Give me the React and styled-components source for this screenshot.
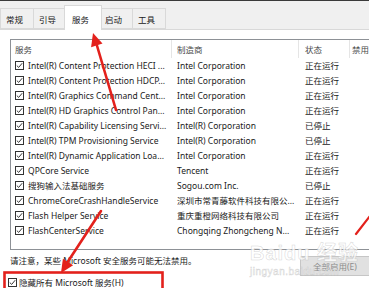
import React from "react";
import styled, { createGlobalStyle } from "styled-components";

const GlobalStyle = createGlobalStyle`
  html, body { margin: 0; padding: 0; background: #fff; }
  * { box-sizing: border-box; }
`;

const FONT = `"Noto Sans", "Noto Sans CJK SC", sans-serif`;

const Root = styled.div({
  position: "relative",
  width: "369px",
  height: "288px",
  overflow: "hidden",
  background: "#fff",
  display: "flex",
  flexDirection: "column",
  fontFamily: FONT,
  fontSize: "8.5px",
  color: "#1a1a1a",
});

const TopEdge = styled.div({
  height: "1px",
  background: "#3a3a3a",
});

const TabStrip = styled.div({
  height: "30px",
  background: "#f0f0f0",
  borderBottom: "1px solid #d9d9d9",
  display: "flex",
  alignItems: "flex-end",
  paddingLeft: "1px",
});

const Tab = styled.div(({ $active }) => ({
  position: "relative",
  zIndex: $active ? 1 : 0,
  width: $active ? "38px" : "34px",
  height: $active ? "25px" : "21px",
  margin: $active ? "0 -2px -1px -3px" : "0 0 0 -1px",
  paddingLeft: $active ? "7px" : "5px",
  paddingTop: $active ? "8px" : "5px",
  background: $active ? "#fff" : "#f0f0f0",
  border: "1px solid #d9d9d9",
  borderBottom: $active ? "none" : "1px solid #d9d9d9",
  lineHeight: "12px",
  color: "#1a1a1a",
}));

const Page = styled.div({
  flex: 1,
  background: "#fff",
  padding: "9px 0 0 10px",
  display: "flex",
  flexDirection: "column",
});

const ListBox = styled.div({
  width: "380px",
  height: "211px",
  border: "1px solid #8d9196",
  background: "#fff",
  overflow: "hidden",
});

const COLS = "161px 127px 51px 1fr";

const HeaderRow = styled.div({
  display: "grid",
  gridTemplateColumns: COLS,
  height: "18px",
});

const HeaderCell = styled.div(({ $pad }) => ({
  display: "flex",
  alignItems: "center",
  paddingLeft: `${$pad}px`,
  borderRight: "1px solid #e5e5e5",
  color: "#4a4a4a",
  whiteSpace: "nowrap",
}));

const Row = styled.div({
  display: "grid",
  gridTemplateColumns: COLS,
  height: "15px",
  alignItems: "center",
});

const Cell = styled.div(({ $pad }) => ({
  display: "flex",
  alignItems: "center",
  gap: "4px",
  paddingLeft: `${$pad}px`,
  whiteSpace: "nowrap",
  overflow: "hidden",
  lineHeight: "15px",
}));

const Box = styled.span({
  flex: "none",
  width: "9px",
  height: "9px",
  border: "1px solid #333",
  background: "#fff",
  display: "inline-flex",
  alignItems: "center",
  justifyContent: "center",
});

const Check = () => (
  <Box>
    <svg width="7" height="7" viewBox="0 0 7 7">
      <path d="M0.8 3.6 L2.7 5.4 L6.2 1.2" fill="none" stroke="#222" strokeWidth="0.9" />
    </svg>
  </Box>
);

const NoteRow = styled.div({
  display: "flex",
  justifyContent: "space-between",
  alignItems: "flex-start",
  marginTop: "5px",
});

const Note = styled.div({
  lineHeight: "12px",
  whiteSpace: "nowrap",
});

const Button = styled.div({
  marginTop: "1px",
  marginRight: "-4px",
  width: "73px",
  height: "20px",
  background: "#e1e1e1",
  border: "1px solid #c6c6c6",
  color: "#8c8c8c",
  display: "flex",
  alignItems: "center",
  paddingLeft: "12px",
  whiteSpace: "nowrap",
});

const HideRow = styled.div({
  display: "flex",
  alignItems: "center",
  gap: "2px",
  marginLeft: "-2px",
  marginTop: "1px",
  lineHeight: "11px",
  whiteSpace: "nowrap",
});

const Watermark = styled.div({
  position: "absolute",
  left: "250px",
  top: "242px",
  color: "rgba(255,255,255,0.8)",
  WebkitTextStroke: "0.5px rgba(170,170,170,0.5)",
  fontFamily: `"Liberation Sans", "Noto Sans CJK SC", sans-serif`,
  pointerEvents: "none",
});

const MarkBig = styled.div({
  fontSize: "20px",
  fontWeight: "bold",
  lineHeight: "22px",
  letterSpacing: "1px",
});

const MarkSmall = styled.div({
  fontSize: "10px",
  lineHeight: "12px",
  marginTop: "2px",
  letterSpacing: "0.5px",
});

const Overlay = styled.svg({
  position: "absolute",
  left: 0,
  top: 0,
  pointerEvents: "none",
});

const RED = "#e3211c";

const services = [
  ["Intel(R) Content Protection HECI ...", "Intel Corporation", "正在运行"],
  ["Intel(R) Content Protection HDCP...", "Intel Corporation", "正在运行"],
  ["Intel(R) Graphics Command Cent...", "Intel Corporation", "正在运行"],
  ["Intel(R) HD Graphics Control Pan...", "Intel Corporation", "正在运行"],
  ["Intel(R) Capability Licensing Servi...", "Intel(R) Corporation", "已停止"],
  ["Intel(R) TPM Provisioning Service", "Intel(R) Corporation", "已停止"],
  ["Intel(R) Dynamic Application Loa...", "Intel Corporation", "正在运行"],
  ["QPCore Service", "Tencent", "正在运行"],
  ["搜狗输入法基础服务", "Sogou.com Inc.", "已停止"],
  ["ChromeCoreCrashHandleService", "深圳市常青藤软件科技有限公...", "正在运行"],
  ["Flash Helper Service", "重庆重橙网络科技有限公司", "正在运行"],
  ["FlashCenterService", "Chongqing Zhongcheng N...", "正在运行"],
];

const tabs = ["常规", "引导", "服务", "启动", "工具"];

const App = () => {
  return (
    <Root>
      <GlobalStyle />
      <TopEdge />
      <TabStrip>
        {tabs.map((t) => (
          <Tab key={t} $active={t === "服务"}>
            {t}
          </Tab>
        ))}
      </TabStrip>
      <Page>
        <ListBox>
          <HeaderRow>
            <HeaderCell $pad={4}>{"服务"}</HeaderCell>
            <HeaderCell $pad={5}>{"制造商"}</HeaderCell>
            <HeaderCell $pad={6}>{"状态"}</HeaderCell>
            <HeaderCell $pad={2}>{"禁用"}</HeaderCell>
          </HeaderRow>
          {services.map(([name, maker, status], idx) => (
            <Row key={`svc-${idx}`}>
              <Cell $pad={4}>
                <Check />
                <span>{name}</span>
              </Cell>
              <Cell $pad={5}>{maker}</Cell>
              <Cell $pad={6}>{status}</Cell>
              <Cell $pad={2} />
            </Row>
          ))}
        </ListBox>
        <NoteRow>
          <Note>{"请注意，某些 Microsoft 安全服务可能无法禁用。"}</Note>
          <Button>{"全部启用(E)"}</Button>
        </NoteRow>
        <HideRow>
          <Check />
          <span>{"隐藏所有 Microsoft 服务(H)"}</span>
        </HideRow>
      </Page>

      <Watermark>
        <MarkBig>{"Baidu 经验"}</MarkBig>
        <MarkSmall>{"jingyan.baidu.com"}</MarkSmall>
      </Watermark>

      <Overlay width="369" height="288" viewBox="0 0 369 288">
        <line x1="116" y1="110" x2="96.5" y2="44" stroke={RED} strokeWidth="2.6" strokeLinecap="round" />
        <polygon points="93,33 102.5,43.6 91.1,47.2" fill={RED} />
        <line x1="101" y1="211" x2="67" y2="263" stroke={RED} strokeWidth="2.6" strokeLinecap="round" />
        <polygon points="61,273 73.1,265.2 62.9,258.8" fill={RED} />
        <line x1="373" y1="212" x2="356" y2="234" stroke={RED} strokeWidth="2.2" strokeLinecap="round" />
        <rect x="4.5" y="272.5" width="158" height="20" fill="none" stroke={RED} strokeWidth="2.6" />
      </Overlay>
    </Root>
  );
};

export default App;
